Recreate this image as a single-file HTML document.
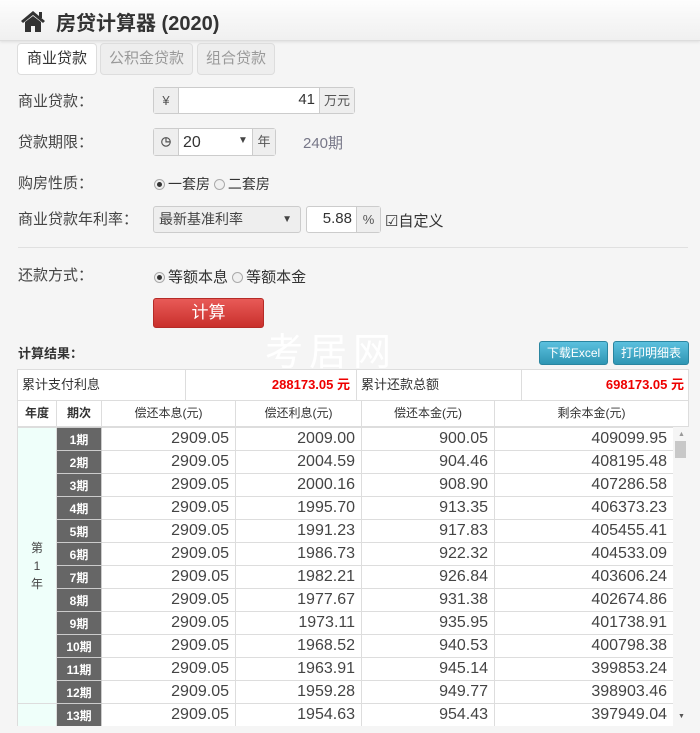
<!DOCTYPE html>
<html><head><meta charset="utf-8"><style>
*{box-sizing:border-box;margin:0;padding:0}
body{width:700px;height:733px;overflow:hidden;background:#f5f5f5;font-family:"Liberation Sans","Noto Sans CJK SC",sans-serif;color:#333;position:relative}
.abs{position:absolute}
.hdr{left:0;top:0;width:700px;height:41px;background:linear-gradient(#fdfdfd,#f0f0f0);border-bottom:1px solid #ddd;box-shadow:0 1px 3px rgba(0,0,0,.1)}
.hdr h1{position:absolute;left:56px;top:7px;font-size:20px;font-weight:bold;color:#333}
.tab{top:43px;height:32px;border:1px solid #ddd;border-radius:4px;font-size:15px;color:#999;background:#eee;text-align:center;line-height:30px}
.lbl{left:18px;font-size:15px;color:#444}
.box{border:1px solid #ccc;border-radius:3px;background:#fff;font-size:15px}
.addon{background:#eee;color:#555;text-align:center;font-size:13px}
.rd{display:inline-block;width:11px;height:11px;border:1px solid #aaa;border-radius:50%;background:#f0f0f0;vertical-align:-1px;position:relative;margin-right:3px}
.rd.on::after{content:"";position:absolute;left:2px;top:2px;width:5px;height:5px;border-radius:50%;background:#333}
table{border-collapse:collapse;font-size:16px}
.t td{border:1px solid #ddd;height:23px;text-align:right;padding-right:6px;color:#444;background:#fff}
.t td.p{background:#666;color:#fff;text-align:center;font-size:12px;font-weight:bold;padding:0;border-color:#ccc}
.t td.y{background:#effffa;text-align:center;font-size:12px;padding:0}
</style></head><body>
<div class="abs hdr">
<svg class="abs" style="left:20px;top:10px" width="26" height="22" viewBox="0 0 26 22"><path d="M13 1L1 11l2 2 10-8 10 8 2-2z" fill="#333"/><path d="M5 12v10h6v-6h4v6h6V12l-8-6z" fill="#333"/><rect x="19" y="2" width="3" height="6" fill="#333"/></svg>
<h1>房贷计算器 (2020)</h1></div>
<div class="abs tab" style="left:17px;width:80px;background:#fff;color:#333">商业贷款</div>
<div class="abs tab" style="left:100px;width:93px">公积金贷款</div>
<div class="abs tab" style="left:197px;width:78px">组合贷款</div>

<div class="abs lbl" style="top:90px">商业贷款：</div>
<div class="abs box" style="left:153px;top:87px;width:202px;height:27px"></div>
<div class="abs addon" style="left:154px;top:88px;width:25px;height:25px;line-height:25px;border-right:1px solid #ccc">¥</div>
<div class="abs" style="left:180px;top:91px;width:135px;text-align:right;font-size:15px">41</div>
<div class="abs addon" style="left:319px;top:88px;width:35px;height:25px;line-height:25px;border-left:1px solid #ccc">万元</div>

<div class="abs lbl" style="top:131px">贷款期限：</div>
<div class="abs box" style="left:153px;top:128px;width:123px;height:28px"></div>
<div class="abs addon" style="left:154px;top:129px;width:25px;height:26px;line-height:24px;border-right:1px solid #ccc;font-size:12px;font-weight:bold">◷</div>
<div class="abs" style="left:183px;top:134px;font-size:16px">20</div>
<div class="abs" style="left:238px;top:135px;font-size:10px;color:#444">▼</div>
<div class="abs addon" style="left:252px;top:129px;width:23px;height:26px;line-height:26px;border-left:1px solid #ccc">年</div>
<div class="abs" style="left:303px;top:132px;font-size:15px;color:#778">240期</div>

<div class="abs lbl" style="top:172px">购房性质：</div>
<div class="abs" style="left:154px;top:174px;font-size:14px;color:#333"><span class="rd on"></span>一套房 <span class="rd"></span>二套房</div>

<div class="abs lbl" style="top:208px">商业贷款年利率：</div>
<div class="abs box" style="left:153px;top:206px;width:148px;height:27px;background:#eee;font-size:14px;line-height:25px;padding-left:5px;color:#444">最新基准利率<span style="position:absolute;right:8px;font-size:10px">▼</span></div>
<div class="abs box" style="left:306px;top:206px;width:75px;height:27px"></div>
<div class="abs" style="left:308px;top:210px;width:44px;text-align:right;font-size:15px">5.88</div>
<div class="abs addon" style="left:356px;top:207px;width:24px;height:25px;line-height:25px;border-left:1px solid #ccc">%</div>
<div class="abs" style="left:385px;top:210px;font-size:15px">☑自定义</div>

<div class="abs" style="left:18px;top:247px;width:670px;border-top:1px solid #e0e0e0"></div>
<div class="abs lbl" style="top:264px">还款方式：</div>
<div class="abs" style="left:154px;top:266px;font-size:15px"><span class="rd on"></span>等额本息 <span class="rd"></span>等额本金</div>
<div class="abs" style="left:153px;top:298px;width:111px;height:30px;background:linear-gradient(#e85a57,#c9302c);border:1px solid #b52b27;border-radius:3px;color:#fff;font-size:17px;text-align:center;line-height:28px">计算</div>

<div class="abs" style="left:18px;top:343px;font-size:13px;font-weight:bold">计算结果：</div>
<div class="abs" style="left:265px;top:333px;font-size:38px;line-height:40px;color:#fff;letter-spacing:6px">考居网</div>
<div class="abs" style="left:539px;top:341px;width:69px;height:24px;background:linear-gradient(#5bc0de,#2f96b4);border:1px solid #2a85a0;border-radius:3px;color:#fff;font-size:12px;text-align:center;line-height:22px">下载Excel</div>
<div class="abs" style="left:613px;top:341px;width:76px;height:24px;background:linear-gradient(#5bc0de,#2f96b4);border:1px solid #2a85a0;border-radius:3px;color:#fff;font-size:12px;text-align:center;line-height:22px">打印明细表</div>

<div class="abs" style="left:17px;top:369px;width:672px;height:32px;background:#fff;border:1px solid #ddd;font-size:13px">
<div class="abs" style="left:0;top:0;width:168px;height:30px;border-right:1px solid #ddd;line-height:30px;padding-left:4px">累计支付利息</div>
<div class="abs" style="left:168px;top:0;width:170px;height:30px;line-height:30px;text-align:right;padding-right:6px;color:#e00;font-weight:bold">288173.05 元</div>
<div class="abs" style="left:338px;top:0;width:166px;height:30px;border-left:1px solid #ddd;border-right:1px solid #ddd;line-height:30px;padding-left:4px">累计还款总额</div>
<div class="abs" style="left:504px;top:0;width:166px;height:30px;line-height:30px;text-align:right;padding-right:4px;color:#e00;font-weight:bold">698173.05 元</div>
</div>
<div class="abs" style="left:17px;top:400px;width:672px;height:27px;background:#fff;border:1px solid #ddd;font-size:12px;font-weight:bold;line-height:25px">
<div class="abs" style="left:0;width:39px;text-align:center;border-right:1px solid #ddd;height:25px">年度</div>
<div class="abs" style="left:39px;width:45px;text-align:center;border-right:1px solid #ddd;height:25px">期次</div>
<div class="abs" style="left:84px;width:134px;text-align:center;border-right:1px solid #ddd;height:25px;font-weight:normal">偿还本息(元)</div>
<div class="abs" style="left:218px;width:126px;text-align:center;border-right:1px solid #ddd;height:25px;font-weight:normal">偿还利息(元)</div>
<div class="abs" style="left:344px;width:133px;text-align:center;border-right:1px solid #ddd;height:25px;font-weight:normal">偿还本金(元)</div>
<div class="abs" style="left:477px;width:193px;text-align:center;height:25px;font-weight:normal">剩余本金(元)</div>
</div>
<div class="abs" style="left:17px;top:427px;width:656px;height:299px;overflow:hidden">
<table class="t" style="width:656px;table-layout:fixed">
<colgroup><col style="width:39px"><col style="width:45px"><col style="width:134px"><col style="width:126px"><col style="width:133px"><col style="width:179px"></colgroup>
<tr><td class="y" rowspan="12" style="line-height:18px">第<br>1<br>年</td><td class="p">1期</td><td>2909.05</td><td>2009.00</td><td>900.05</td><td>409099.95</td></tr>
<tr><td class="p">2期</td><td>2909.05</td><td>2004.59</td><td>904.46</td><td>408195.48</td></tr>
<tr><td class="p">3期</td><td>2909.05</td><td>2000.16</td><td>908.90</td><td>407286.58</td></tr>
<tr><td class="p">4期</td><td>2909.05</td><td>1995.70</td><td>913.35</td><td>406373.23</td></tr>
<tr><td class="p">5期</td><td>2909.05</td><td>1991.23</td><td>917.83</td><td>405455.41</td></tr>
<tr><td class="p">6期</td><td>2909.05</td><td>1986.73</td><td>922.32</td><td>404533.09</td></tr>
<tr><td class="p">7期</td><td>2909.05</td><td>1982.21</td><td>926.84</td><td>403606.24</td></tr>
<tr><td class="p">8期</td><td>2909.05</td><td>1977.67</td><td>931.38</td><td>402674.86</td></tr>
<tr><td class="p">9期</td><td>2909.05</td><td>1973.11</td><td>935.95</td><td>401738.91</td></tr>
<tr><td class="p">10期</td><td>2909.05</td><td>1968.52</td><td>940.53</td><td>400798.38</td></tr>
<tr><td class="p">11期</td><td>2909.05</td><td>1963.91</td><td>945.14</td><td>399853.24</td></tr>
<tr><td class="p">12期</td><td>2909.05</td><td>1959.28</td><td>949.77</td><td>398903.46</td></tr>
<tr><td class="y"></td><td class="p">13期</td><td>2909.05</td><td>1954.63</td><td>954.43</td><td>397949.04</td></tr>
</table></div>
<div class="abs" style="left:673px;top:427px;width:16px;height:299px;background:#f5f5f5">
<div class="abs" style="left:5px;top:4px;font-size:7px;color:#999">▲</div>
<div class="abs" style="left:2px;top:14px;width:11px;height:17px;background:#c8c8c8"></div>
<div class="abs" style="left:5px;top:286px;font-size:7px;color:#555">▼</div>
</div>
</body></html>
